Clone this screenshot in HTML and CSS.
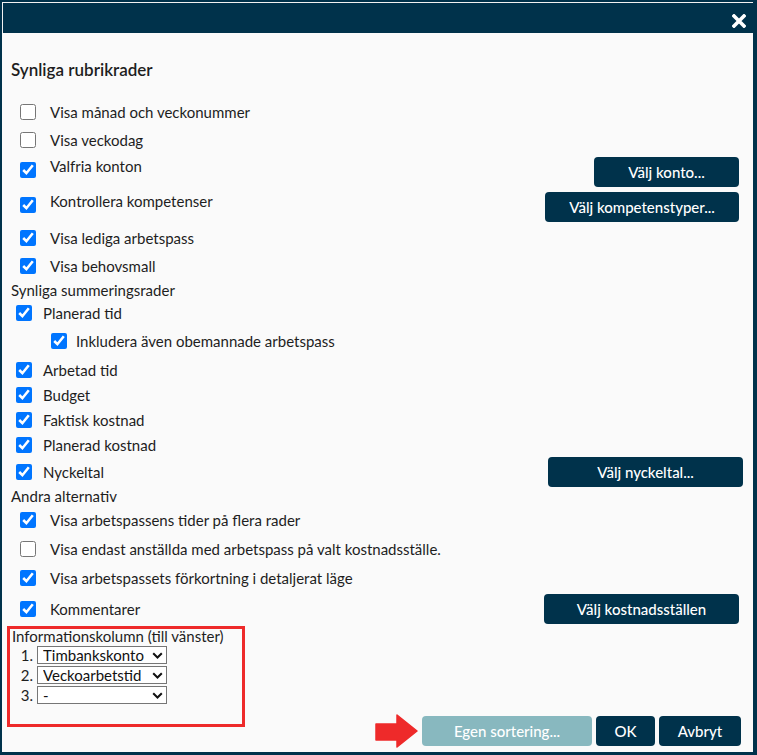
FILE: index.html
```html
<!DOCTYPE html>
<html lang="sv">

<head>
    <meta charset="UTF-8">
    <meta name="viewport" content="width=device-width, initial-scale=1.0">
    <title>Visningsalternativ</title>
    <link rel="stylesheet" href="styles.css">
</head>

<body>
    <div class="dialog">
        <!-- titelrad -->
        <div class="titlebar">
            <button class="close" title="Stäng">
                <svg width="14" height="14" viewBox="0 0 14 14">
                    <path d="M2 2 L12 12 M12 2 L2 12" stroke="#fff" stroke-width="3.6" stroke-linecap="square" />
                </svg>
            </button>
        </div>

        <div class="content">
            <h2 class="title">Synliga rubrikrader</h2>

            <!-- rubrikrader -->
            <div class="group head">
                <div class="row"><label class="check"><input type="checkbox"><span>Visa månad och veckonummer</span></label></div>
                <div class="row"><label class="check"><input type="checkbox"><span>Visa veckodag</span></label></div>
                <div class="row tall">
                    <label class="check lifted"><input type="checkbox" checked><span>Valfria konton</span></label>
                    <button class="btn w145">Välj konto...</button>
                </div>
                <div class="row tall">
                    <label class="check lifted"><input type="checkbox" checked><span>Kontrollera kompetenser</span></label>
                    <button class="btn w194">Välj kompetenstyper...</button>
                </div>
                <div class="row"><label class="check"><input type="checkbox" checked><span>Visa lediga arbetspass</span></label></div>
                <div class="row"><label class="check"><input type="checkbox" checked><span>Visa behovsmall</span></label></div>
            </div>

            <!-- summeringsrader -->
            <div class="section-label sum-label">Synliga summeringsrader</div>
            <div class="group sum">
                <div class="row r25"><label class="check"><input type="checkbox" checked><span>Planerad tid</span></label></div>
                <div class="row r32 sub"><label class="check"><input type="checkbox" checked><span>Inkludera även obemannade arbetspass</span></label></div>
                <div class="row r25"><label class="check"><input type="checkbox" checked><span>Arbetad tid</span></label></div>
                <div class="row r25"><label class="check"><input type="checkbox" checked><span>Budget</span></label></div>
                <div class="row r25"><label class="check"><input type="checkbox" checked><span>Faktisk kostnad</span></label></div>
                <div class="row r25"><label class="check"><input type="checkbox" checked><span>Planerad kostnad</span></label></div>
                <div class="row r30">
                    <label class="check"><input type="checkbox" checked><span>Nyckeltal</span></label>
                    <button class="btn w195 nudge">Välj nyckeltal...</button>
                </div>
            </div>

            <!-- andra alternativ -->
            <div class="section-label other-label">Andra alternativ</div>
            <div class="group head">
                <div class="row r29"><label class="check"><input type="checkbox" checked><span>Visa arbetspassens tider på flera rader</span></label></div>
                <div class="row r29"><label class="check"><input type="checkbox"><span>Visa endast anställda med arbetspass på valt kostnadsställe.</span></label></div>
                <div class="row r29"><label class="check"><input type="checkbox" checked><span>Visa arbetspassets förkortning i detaljerat läge</span></label></div>
                <div class="row r34">
                    <label class="check"><input type="checkbox" checked><span>Kommentarer</span></label>
                    <button class="btn w195">Välj kostnadsställen</button>
                </div>
            </div>

            <!-- informationskolumn och knappar -->
            <div class="bottom">
                <div class="infobox">
                    <div class="info-label">Informationskolumn (till vänster)</div>
                    <div class="pick"><span class="num">1.</span>
                        <div class="select-wrap">
                            <select>
                                <option>Timbankskonto</option>
                            </select>
                            <svg class="chev" width="11" height="7" viewBox="0 0 11 7"><path d="M1.2 1.2 L5.5 5.5 L9.8 1.2" fill="none" stroke="#111" stroke-width="2" /></svg>
                        </div>
                    </div>
                    <div class="pick"><span class="num">2.</span>
                        <div class="select-wrap">
                            <select>
                                <option>Veckoarbetstid</option>
                            </select>
                            <svg class="chev" width="11" height="7" viewBox="0 0 11 7"><path d="M1.2 1.2 L5.5 5.5 L9.8 1.2" fill="none" stroke="#111" stroke-width="2" /></svg>
                        </div>
                    </div>
                    <div class="pick"><span class="num">3.</span>
                        <div class="select-wrap">
                            <select>
                                <option>-</option>
                            </select>
                            <svg class="chev" width="11" height="7" viewBox="0 0 11 7"><path d="M1.2 1.2 L5.5 5.5 L9.8 1.2" fill="none" stroke="#111" stroke-width="2" /></svg>
                        </div>
                    </div>
                </div>

                <div class="actions">
                    <svg class="arrow" width="43" height="34" viewBox="0 0 43 34">
                        <path d="M1 10 L22 10 L22 1 L42 17 L22 33 L22 26 L1 26 Z" fill="#ee2a2a" stroke="#ee2a2a" stroke-width="1.5" stroke-linejoin="round" />
                    </svg>
                    <button class="btn w170 disabled">Egen sortering...</button>
                    <button class="btn w59">OK</button>
                    <button class="btn w82">Avbryt</button>
                </div>
            </div>
        </div>
    </div>
</body>

</html>
```

FILE: styles.css
```css
* {
    margin: 0;
    padding: 0;
    box-sizing: border-box;
}

html,
body {
    height: 100%;
}

body {
    background: #00324b;
    font-family: Lato, "Open Sans", sans-serif;
    font-size: 15px;
    color: #1e1e1e;
}

.dialog {
    margin: 2px 4px 3px 2px;
    height: 750px;
    background: #fafafa;
    display: flex;
    flex-direction: column;
}

.titlebar {
    height: 31px;
    background: #00324b;
    border-top: 1px solid #f2f2f2;
    border-left: 1px solid #f2f2f2;
    display: flex;
    justify-content: flex-end;
    align-items: center;
    padding-right: 7px;
}

.close {
    background: none;
    border: none;
    width: 14px;
    height: 14px;
    display: flex;
    margin-top: 5px;
}

.content {
    flex: 1;
    padding: 27px 14px 0 9px;
    display: flex;
    flex-direction: column;
}

.title {
    font-size: 17px;
    font-weight: 600;
    line-height: 20px;
    height: 20px;
    margin-bottom: 18px;
}

.row {
    display: flex;
    align-items: center;
    justify-content: space-between;
    height: 28px;
}

.row.tall {
    height: 35px;
}

.r25 { height: 25px; }
.r29 { height: 29px; }
.r30 { height: 30px; }
.r32 { height: 32px; }
.r34 { height: 34px; }

.check {
    display: flex;
    align-items: center;
    line-height: 18px;
}

.check input {
    width: 16px;
    height: 16px;
    margin: 0;
    accent-color: #0075ff;
    flex: none;
}

.head .check {
    padding-left: 9px;
}

.head .check span {
    margin-left: 14px;
}

.sum .check {
    padding-left: 5px;
}

.sum .check span {
    margin-left: 11px;
}

.sum .sub .check {
    padding-left: 40px;
}

.sum .sub .check span {
    margin-left: 9px;
}

.check.lifted {
    align-items: flex-start;
    margin-bottom: 8px;
}

.check.lifted input {
    margin-top: 5px;
}

.section-label {
    line-height: 18px;
}

.sum-label {
    height: 20px;
    line-height: 20px;
}

.other-label {
    height: 18px;
}

.btn {
    height: 30px;
    background: #00324b;
    color: #fff;
    border: none;
    border-radius: 4px;
    font-family: Lato, "Open Sans", sans-serif;
    font-size: 15px;
    font-weight: 500;
}

.w145 { width: 145px; }
.w194 { width: 194px; }
.w195 { width: 195px; }
.w170 { width: 170px; }
.w59 { width: 59px; }
.w82 { width: 82px; }

.nudge {
    margin-right: -4px;
}

.btn.disabled {
    background: #88b8bf;
}

.bottom {
    flex: 1;
    display: flex;
    justify-content: space-between;
    align-items: flex-start;
}

.infobox {
    width: 238px;
    height: 101px;
    border: 3px solid #ee2a2a;
    margin-left: -4px;
    padding-left: 2px;
}

.info-label {
    line-height: 17px;
    margin-top: -1px;
}

.pick {
    display: flex;
    align-items: center;
    height: 20px;
}

.num {
    width: 25px;
    text-align: right;
    padding-right: 4px;
}

.select-wrap {
    position: relative;
    width: 130px;
    height: 18px;
}

select {
    appearance: none;
    -webkit-appearance: none;
    display: block;
    width: 130px;
    height: 18px;
    font-family: Lato, "Open Sans", sans-serif;
    font-size: 15px;
    color: #111;
    background: #fff;
    border: 1px solid #767676;
    border-radius: 0;
    padding: 0 0 0 5px;
    line-height: 16px;
}

.chev {
    position: absolute;
    right: 4px;
    top: 6px;
    pointer-events: none;
}

.actions {
    display: flex;
    align-items: center;
    gap: 4px;
    margin-top: 88px;
    margin-right: -2px;
}
```
